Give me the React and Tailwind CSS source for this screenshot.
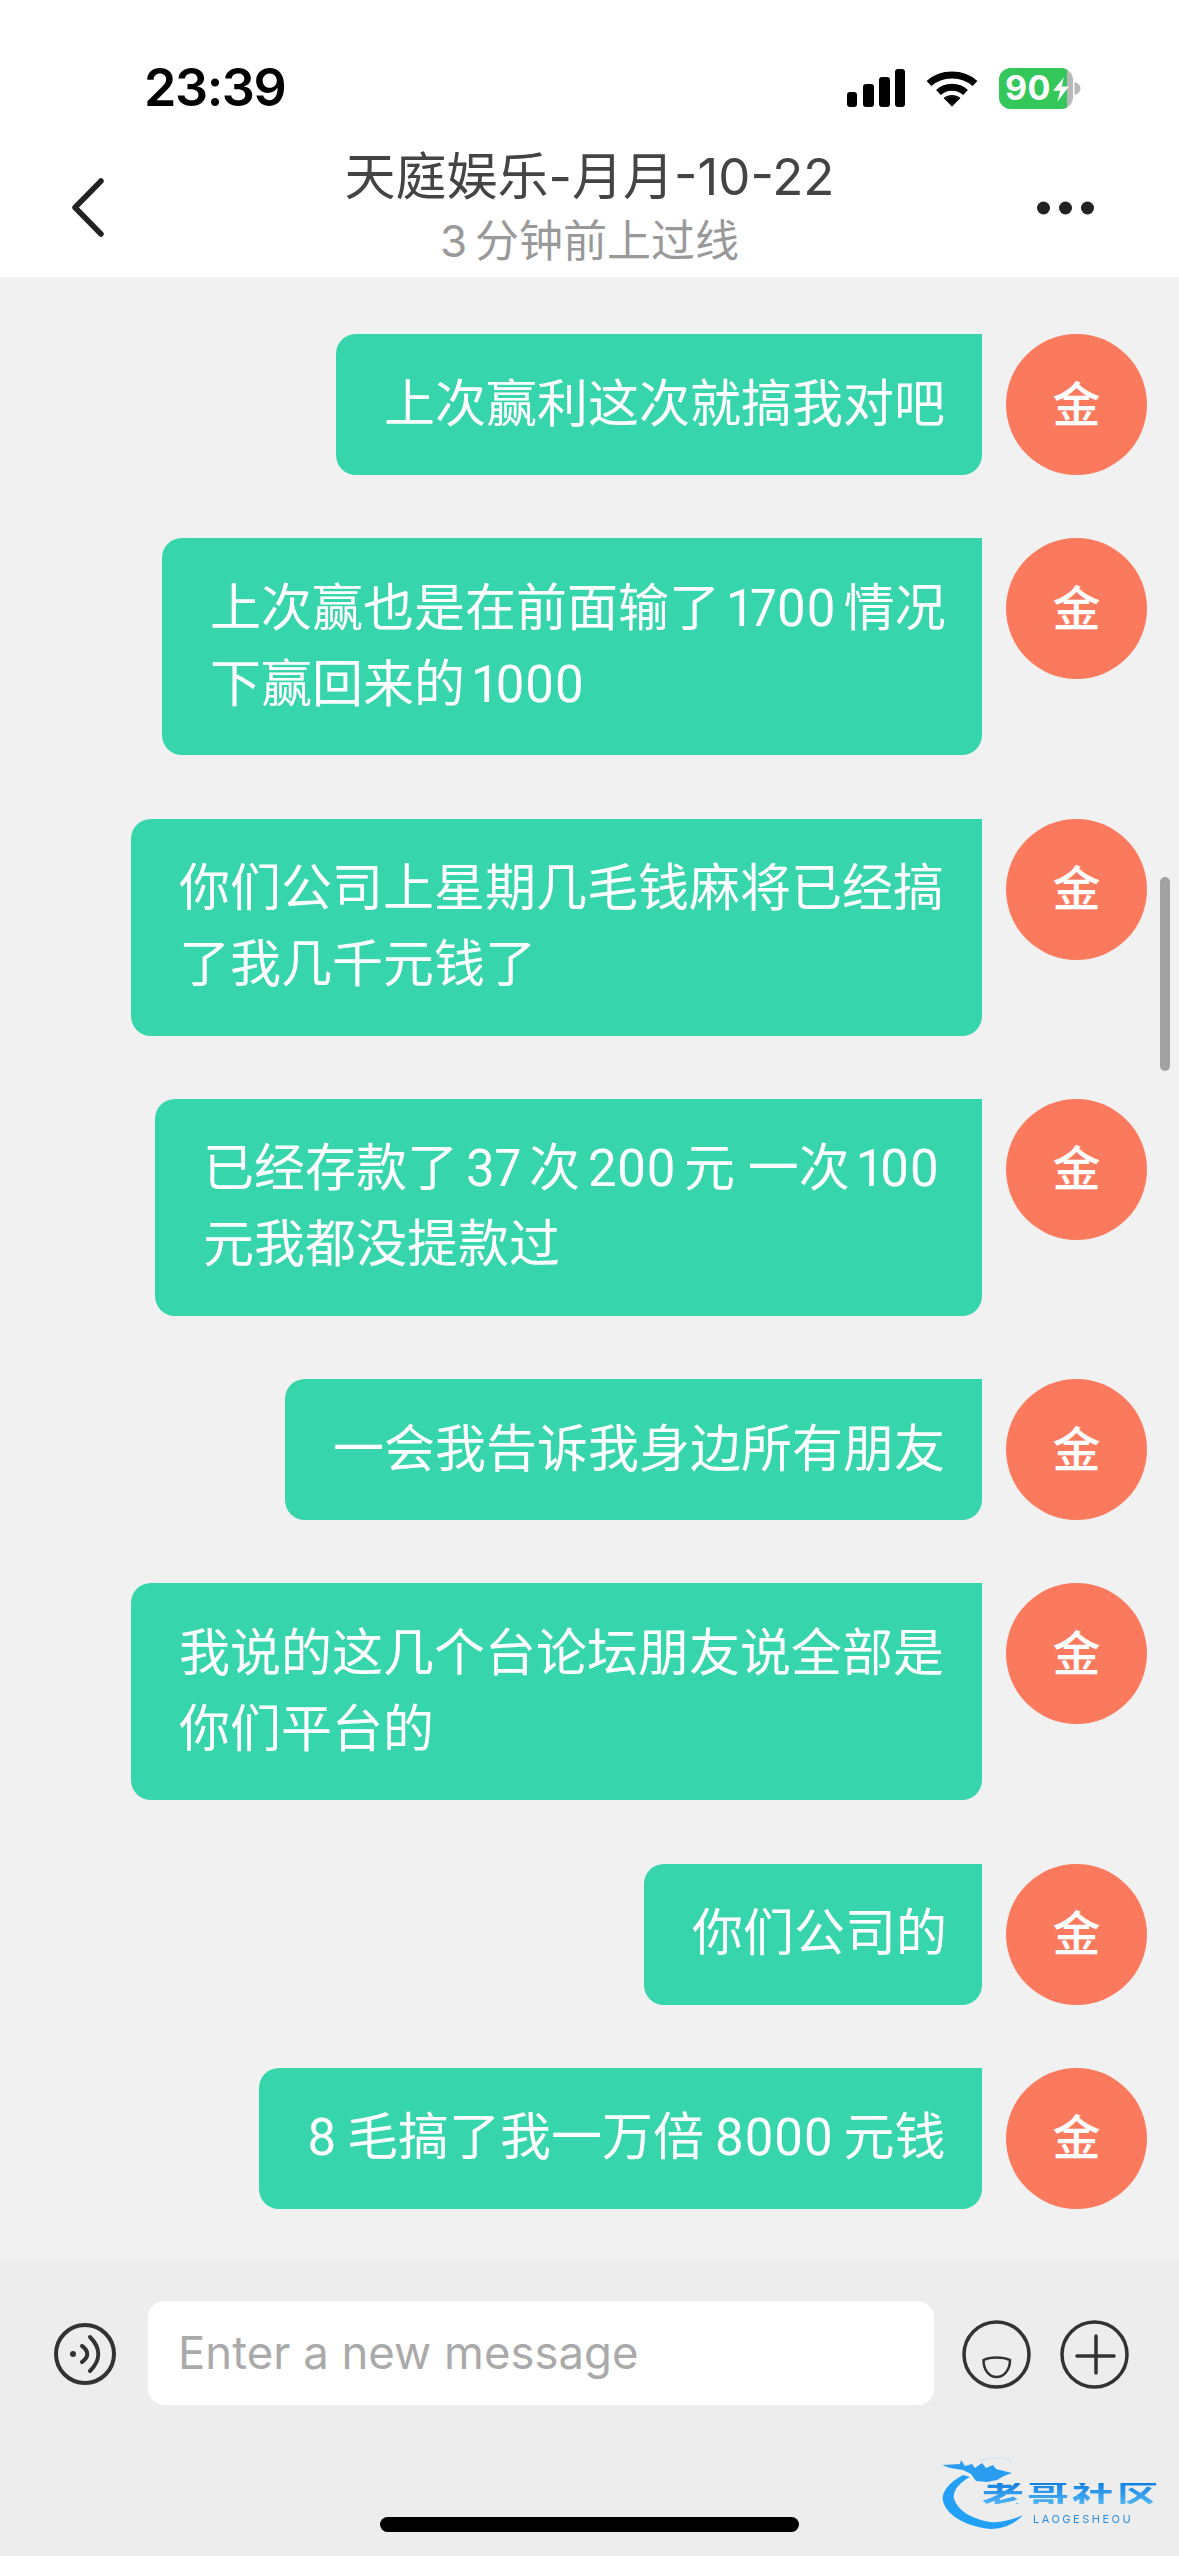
const cjk = { fontFamily: '"Inter","Noto Sans CJK SC",sans-serif' };
const bubbleFont = { fontFamily: '"Roboto","Noto Sans CJK SC",sans-serif' };

const messages = [
  { w: 646, lines: ['上次赢利这次就搞我对吧'] },
  { w: 820, lines: [['上次赢也是在前面输了', '1700', '情况'], ['下赢回来的', '1000']] },
  { w: 851, lines: ['你们公司上星期几毛钱麻将已经搞', '了我几千元钱了'] },
  { w: 827, lines: [['已经存款了', '37', '次', '200', '元 一次', '100'], '元我都没提款过'] },
  { w: 697, lines: ['一会我告诉我身边所有朋友'] },
  { w: 851, lines: ['我说的这几个台论坛朋友说全部是', '你们平台的'] },
  { w: 338, lines: ['你们公司的'] },
  { w: 723, lines: ['8\u2009毛搞了我一万倍\u20098000\u2009元钱'] },
];

function Line({ parts }) {
  const list = Array.isArray(parts) ? parts : [parts];
  return (
    <div className="h-[76px] flex gap-[8px]">
      {list.map((p) => (
        <span key={p}>{p}</span>
      ))}
    </div>
  );
}

function Message({ w, lines }) {
  return (
    <div className="flex justify-end items-start gap-6 pr-[32px]">
      <div
        className="bg-[#36d5ab] text-white rounded-b-[20px] rounded-tl-[20px] pl-[48px] py-[32.5px] text-[51px] leading-[76px] font-normal proportional-nums whitespace-nowrap overflow-hidden"
        style={{ width: w, ...bubbleFont }}
      >
        {lines.map((l) => (
          <Line key={String(l)} parts={l} />
        ))}
      </div>
      <div className="w-[141px] h-[141px] shrink-0 rounded-full bg-[#fb7a5e] text-white flex items-center justify-center text-[48px] font-medium">
        金
      </div>
    </div>
  );
}

function Signal() {
  return (
    <svg width="58" height="38" viewBox="0 0 58 38" fill="#000">
      <rect x="0" y="23" width="10" height="15" rx="3" />
      <rect x="16" y="15" width="11" height="23" rx="3" />
      <rect x="32" y="8" width="11" height="30" rx="3" />
      <rect x="48" y="0" width="10" height="38" rx="3" />
    </svg>
  );
}

function Wifi() {
  return (
    <svg width="52" height="38" viewBox="0 0 52 38" fill="none" stroke="#000" strokeWidth="7">
      <path d="M3 14.5C15 3 37 3 49 14.5" />
      <path d="M12.5 23.5C20 16.5 32 16.5 39.5 23.5" />
      <path d="M17.5 29L26 37.5L34.5 29C29.5 25 22.5 25 17.5 29Z" fill="#000" stroke="none" />
    </svg>
  );
}

function Battery() {
  return (
    <div className="relative w-[82px] h-[41px] flex">
      <div className="w-[74px] h-[41px] rounded-[12px] bg-[#b9b9b9] overflow-hidden">
        <div
          className="w-[68px] h-[41px] bg-[#34c85a] flex items-center pl-[6px] text-white text-[34px] font-bold leading-none tracking-[0.5px]"
          style={{ fontFamily: '"Inter",sans-serif' }}
        >
          90
        </div>
      </div>
      <svg className="absolute left-[54px] top-[8px]" width="16" height="27" viewBox="0 0 18 27" fill="#fff">
        <path d="M12 0L0 15H8L5 27L18 10H10Z" />
      </svg>
      <svg className="absolute left-[75px] top-[14px]" width="7" height="13" viewBox="0 0 7 15" fill="#b9b9b9">
        <path d="M0 0C4 1 7 4 7 7.5C7 11 4 14 0 15Z" />
      </svg>
    </div>
  );
}

function Logo() {
  return (
    <div className="absolute left-[942px] top-[2457px] w-[225px] h-[78px] blur-[0.6px]">
      <svg className="absolute left-0 top-0" width="90" height="76" viewBox="0 0 90 76" fill="none">
        <path d="M0 8L18 7L19 3L23 9L30 7L33 11L40 6L44 11L51 8L54 12L70 16L62 19L55 23L45 25L34 24L29 17L21 13L8 11Z" fill="#2a9df0" />
        <path d="M38 4C50 -1 64 -1 70 6" stroke="#dbe7f0" strokeWidth="2" />
        <path d="M21 18C6 26 -1 36 1 44C4 56 18 68 48 72C62 72 74 66 81 58C70 63 58 66 48 65C30 62 16 54 12 42C10 34 18 25 28 20Z" fill="#22a0f5" />
      </svg>
      <div
        className="absolute left-[40px] top-[26px] h-[29px] text-[42px] leading-[29px] font-bold whitespace-nowrap tracking-[3px] origin-top scale-y-[0.72] bg-linear-to-b from-[#0f80e0] to-[#4db5f5] bg-clip-text text-transparent"
        style={{ fontFamily: '"Noto Sans CJK SC",sans-serif' }}
      >
        老哥社区
      </div>
      <div
        className="absolute left-[91px] top-[57px] text-[11px] leading-[10px] text-[#2a8ee0] whitespace-nowrap tracking-[2.5px]"
        style={{ fontFamily: '"Inter",sans-serif' }}
      >
        LAOGESHEOU
      </div>
    </div>
  );
}

export default function App() {
  return (
    <div className="relative w-[1179px] h-[2556px] flex flex-col overflow-hidden bg-[#f1f1f1]" style={cjk}>
      <header className="relative h-[277px] shrink-0 bg-white">
        <div className="flex items-center justify-between pt-[69px] pl-[144px] pr-[98px] h-[107px]">
          <span
            className="text-[52px] font-semibold leading-[38px] tracking-[-1.4px] text-black"
            style={{ fontFamily: '"Inter",sans-serif' }}
          >
            23:39
          </span>
          <div className="flex items-center gap-[21px]">
            <Signal />
            <Wifi />
            <Battery />
          </div>
        </div>
        <div className="flex flex-col items-center mt-[40px]">
          <div className="text-[51px] leading-[60px] text-[#444] whitespace-nowrap">天庭娱乐-月月-10-22</div>
          <div className="text-[44px] leading-[54px] mt-[7px] text-[#999] whitespace-nowrap">{'3\u2009分钟前上过线'}</div>
        </div>
        <svg className="absolute left-[70px] top-[177px]" width="36" height="61" viewBox="0 0 36 61" fill="none" stroke="#222" strokeWidth="5.5" strokeLinecap="round" strokeLinejoin="round">
          <path d="M31 4L5 30.5L31 57" />
        </svg>
        <svg className="absolute left-[1037px] top-[201px]" width="57" height="14" viewBox="0 0 57 14" fill="#222">
          <circle cx="6.5" cy="7" r="6.5" />
          <circle cx="28.5" cy="7" r="6.5" />
          <circle cx="50.5" cy="7" r="6.5" />
        </svg>
      </header>

      <main className="relative flex-1 min-h-0 pt-[57px] flex flex-col gap-[63.25px] overflow-hidden">
        {messages.map((m) => (
          <Message key={String(m.lines[0])} {...m} />
        ))}
        <div className="absolute right-[9px] top-[600px] w-[10px] h-[194px] rounded-full bg-[#a2a2a2]" />
      </main>

      <footer className="relative h-[296px] shrink-0 bg-[#ededed] flex items-start pt-[41px] pl-[54px]">
        <svg className="mt-[22px] shrink-0" width="62" height="62" viewBox="0 0 62 62" fill="none" stroke="#333" strokeWidth="4">
          <circle cx="31" cy="31" r="29" />
          <circle cx="19" cy="31" r="3" fill="#333" stroke="none" />
          <path d="M28 23C35 28 35 34 28 39" strokeLinecap="round" />
          <path d="M36 14C47 25 47 37 36 48" strokeLinecap="round" />
        </svg>
        <div className="ml-[32px] w-[786px] h-[104px] rounded-[16px] bg-white flex items-center pl-[30px]">
          <span className="text-[45.5px] font-normal text-[#aaa] whitespace-nowrap" style={{ fontFamily: '"Inter",sans-serif' }}>
            Enter a new message
          </span>
        </div>
        <svg className="ml-[28px] mt-[19px] shrink-0" width="69" height="69" viewBox="0 0 69 69" fill="none" stroke="#333" strokeWidth="3.5">
          <circle cx="34.5" cy="34.5" r="32.5" />
          <path d="M21.5 40C28 36.5 41 36.5 48 40C48 50 42 57 34.5 57C27 57 21.5 50 21.5 40Z" strokeWidth="2.5" />
        </svg>
        <svg className="ml-[29px] mt-[19px] shrink-0" width="69" height="69" viewBox="0 0 69 69" fill="none" stroke="#333" strokeWidth="3.5">
          <circle cx="34.5" cy="34.5" r="32.5" />
          <path d="M17 36H54M36 16V53" strokeLinecap="round" />
        </svg>
      </footer>

      <div className="absolute left-[380px] top-[2517px] w-[419px] h-[15px] rounded-full bg-black" />
      <Logo />
    </div>
  );
}
